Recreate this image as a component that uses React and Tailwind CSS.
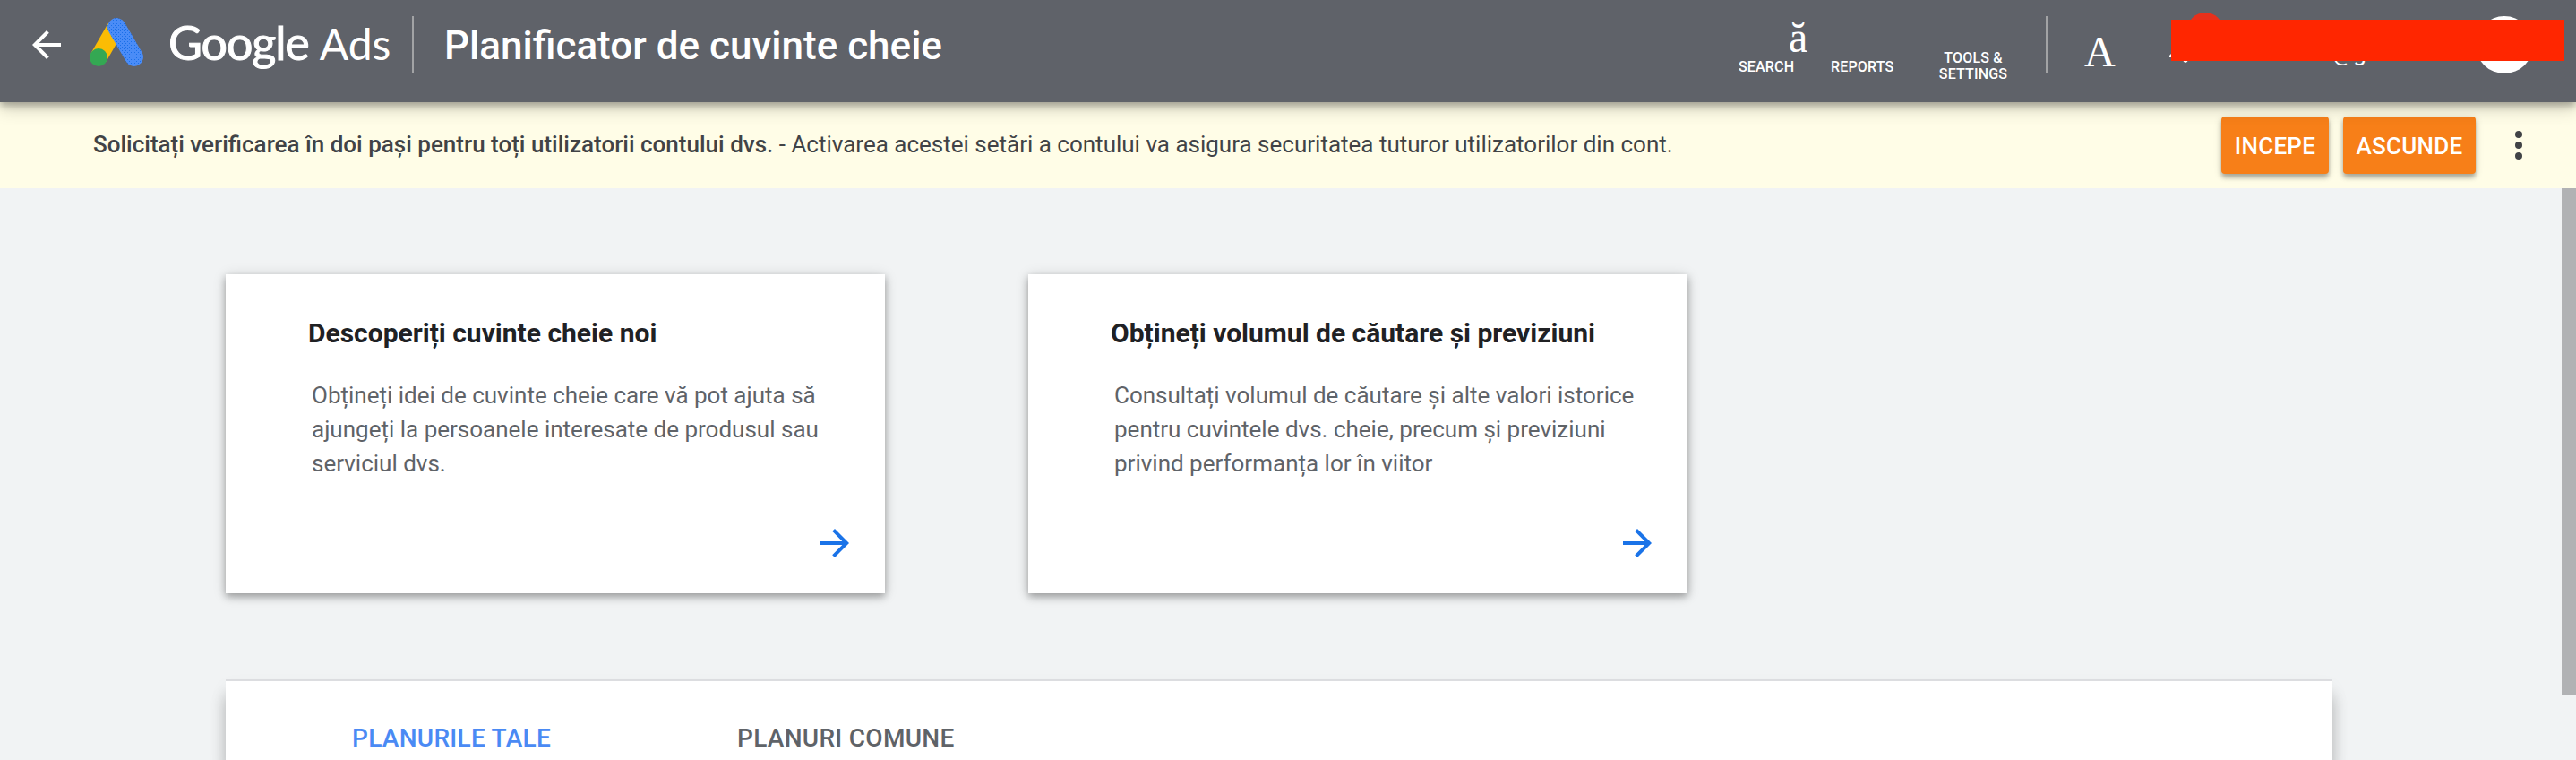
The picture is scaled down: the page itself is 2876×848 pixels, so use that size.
import React, { useState } from "react";
import { MdArrowBack, MdArrowForward } from "react-icons/md";

const cards = [
  {
    title: "Descoperiți cuvinte cheie noi",
    lines: [
      "Obțineți idei de cuvinte cheie care vă pot ajuta să",
      "ajungeți la persoanele interesate de produsul sau",
      "serviciul dvs.",
    ],
  },
  {
    title: "Obțineți volumul de căutare și previziuni",
    lines: [
      "Consultați volumul de căutare și alte valori istorice",
      "pentru cuvintele dvs. cheie, precum și previziuni",
      "privind performanța lor în viitor",
    ],
  },
];

const tabs = ["PLANURILE TALE", "PLANURI COMUNE"];

function AdsLogo() {
  return (
    <svg width="60" height="56" viewBox="0 0 60 56" className="mb-1 ml-6 shrink-0">
      <defs>
        <pattern id="dots" width="4" height="4" patternUnits="userSpaceOnUse">
          <rect width="4" height="4" fill="#4a8cf7" />
          <rect width="1" height="1" fill="#1a6fe8" />
          <rect x="2" y="2" width="1" height="1" fill="#1a6fe8" />
        </pattern>
      </defs>
      <path d="M29 11L10 44" stroke="#fbbc04" strokeWidth="19.5" />
      <path
        d="M30.3 10.3L49.7 43.7"
        stroke="url(#dots)"
        strokeWidth="20.5"
        strokeLinecap="round"
      />
      <circle cx="10" cy="44" r="10" fill="#34a853" />
    </svg>
  );
}

function Account() {
  return (
    <>
      {/* Notification bell and badge */}
      <svg
        width="60"
        height="60"
        viewBox="0 0 60 60"
        className="absolute top-3 left-[2422px]"
      >
        <circle cx="40" cy="22" r="20" fill="#e8301b" />
        <path d="M0 52V50L2 48V52Z" fill="#fff" />
        <path d="M15 55H21Q20 58 18 58T15 55Z" fill="#fff" />
      </svg>

      <span className="absolute top-[46px] left-[2604px] text-[26px] leading-none">
        @g
      </span>
      <div className="absolute top-[18px] left-[2764px] size-16 rounded-full bg-white" />

      {/* Hides the account details */}
      <div className="absolute top-[22px] left-[2424px] h-[46px] w-[439px] bg-[#ff2600]" />
    </>
  );
}

function Header() {
  return (
    <header className="relative z-10 flex h-[114px] items-start bg-[#5f6269] text-white shadow-[0_4px_8px_rgba(0,0,0,0.28),0_8px_18px_rgba(0,0,0,0.16)]">
      <div className="flex h-[100px] w-[1941px] shrink-0 items-center pl-7">
        <button type="button">
          <MdArrowBack className="size-12" />
        </button>
        <AdsLogo />
        <div className="ml-7 flex w-[248px] items-baseline pb-1.5 font-['Lato'] leading-none whitespace-nowrap">
          <span className="text-[52px] tracking-[-1.1px] [-webkit-text-stroke:1px_white]">
            Google
          </span>
          <span className="ml-3 text-[48px]">Ads</span>
        </div>
        <div className="ml-[24px] h-16 w-0.5 bg-[#a2a3a5]" />
        <h1 className="ml-[34px] pt-0.5 text-[44px] leading-[52px] font-medium whitespace-nowrap">
          Planificator de cuvinte cheie
        </h1>
      </div>

      <nav className="flex items-start text-[16px] leading-[18px] font-medium tracking-[0.01em]">
        <div className="relative w-[103px] pt-[66px]">
          <span className="absolute top-[18px] left-[56px] font-['Liberation_Serif'] text-[48px] leading-none font-normal">
            ă
          </span>
          SEARCH
        </div>
        <div className="w-[101px] pt-[66px]">REPORTS</div>
        <div className="w-[116px] pt-[56px] text-center">
          TOOLS &amp;
          <br />
          SETTINGS
        </div>
      </nav>
      <div className="mt-[18px] ml-[23px] h-16 w-0.5 bg-[#a2a3a5]" />
      <span className="mt-[34px] ml-[41px] font-['Liberation_Serif'] text-[48px] leading-none">
        A
      </span>
      <Account />
    </header>
  );
}

function Banner() {
  return (
    <div className="flex h-24 items-center bg-[#fffde7] pl-[104px] text-[26px] text-[#414346]">
      <p className="w-[2376px] pb-0.5 whitespace-nowrap">
        <span className="font-medium">
          Solicitați verificarea în doi pași pentru toți utilizatorii contului
          dvs.
        </span>{" "}
        - Activarea acestei setări a contului va asigura securitatea tuturor
        utilizatorilor din cont.
      </p>
      <div className="flex gap-4 font-medium tracking-[0.01em] text-white">
        <button
          type="button"
          className="h-16 w-[120px] rounded bg-[#f77f18] pt-0.5 shadow-[0_4px_5px_rgba(0,0,0,0.28),0_2px_10px_rgba(0,0,0,0.14)]"
        >
          INCEPE
        </button>
        <button
          type="button"
          className="h-16 w-[148px] rounded bg-[#f77f18] pt-0.5 shadow-[0_4px_5px_rgba(0,0,0,0.28),0_2px_10px_rgba(0,0,0,0.14)]"
        >
          ASCUNDE
        </button>
      </div>
      <button type="button" className="ml-11 flex flex-col gap-1">
        <span className="size-2 rounded-full bg-[#414346]" />
        <span className="size-2 rounded-full bg-[#414346]" />
        <span className="size-2 rounded-full bg-[#414346]" />
      </button>
    </div>
  );
}

function Card({ title, lines }) {
  return (
    <div className="flex h-[356px] w-[736px] flex-col bg-white pt-12 pr-8 pb-8 pl-[92px] shadow-[0_4px_8px_rgba(0,0,0,0.28),0_2px_14px_rgba(0,0,0,0.16)]">
      <h2 className="text-[30px] leading-9 font-bold text-[#202124]">
        {title}
      </h2>
      <div className="mt-8 pl-1 text-[26px] leading-[38px] whitespace-nowrap text-[#5f6368]">
        {lines.map((line) => (
          <p key={line}>{line}</p>
        ))}
      </div>
      <MdArrowForward className="mt-auto size-12 self-end text-[#1a73e8]" />
    </div>
  );
}

function App() {
  const [activeTab, setActiveTab] = useState(tabs[0]);

  return (
    <div className="flex h-[848px] flex-col overflow-hidden bg-[#f1f3f4] font-['Roboto',sans-serif]">
      <Header />
      <Banner />

      <div className="flex flex-1 justify-between">
        <main className="pt-24 pl-[252px]">
          <div className="flex gap-40">
            {cards.map((card) => (
              <Card key={card.title} title={card.title} lines={card.lines} />
            ))}
          </div>

          {/* Plans */}
          <div className="mt-24 flex h-[90px] w-[2352px] items-start gap-[208px] border-t-2 border-[#dcdde0] bg-white pt-11 pl-[141px] shadow-[0_20px_16px_rgba(0,0,0,0.22),0_10px_18px_rgba(0,0,0,0.08)]">
            {tabs.map((tab) => (
              <button
                key={tab}
                type="button"
                onClick={() => setActiveTab(tab)}
                className={
                  tab === activeTab
                    ? "text-[28px] leading-10 font-medium tracking-[0.01em] text-[#4a8af4]"
                    : "text-[28px] leading-10 font-medium tracking-[0.01em] text-[#5f6368]"
                }
              >
                {tab}
              </button>
            ))}
          </div>
        </main>

        {/* Scrollbar */}
        <div className="h-[566px] w-4 bg-[#b1b2b4]" />
      </div>
    </div>
  );
}

export default App;
